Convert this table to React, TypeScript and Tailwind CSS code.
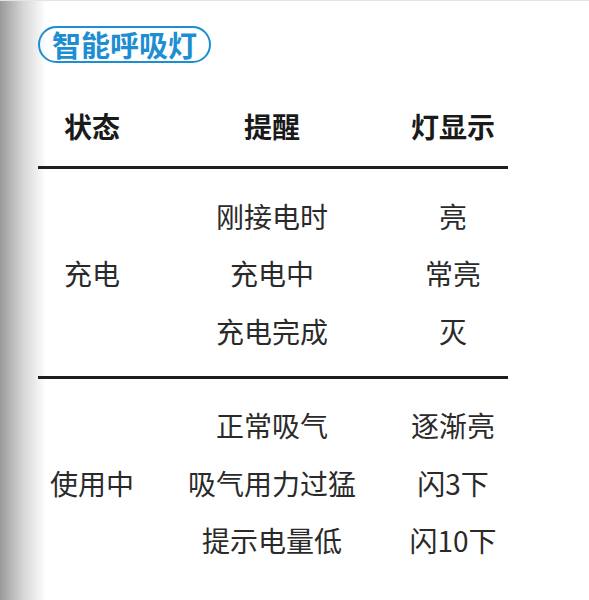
import React from 'react'

interface Row {
  tip: string
  light: string
}

interface Group {
  state: string
  rows: Row[]
}

const groups: Group[] = [
  {
    state: '充电',
    rows: [
      { tip: '刚接电时', light: '亮' },
      { tip: '充电中', light: '常亮' },
      { tip: '充电完成', light: '灭' },
    ],
  },
  {
    state: '使用中',
    rows: [
      { tip: '正常吸气', light: '逐渐亮' },
      { tip: '吸气用力过猛', light: '闪3下' },
      { tip: '提示电量低', light: '闪10下' },
    ],
  },
]

const font = { fontFamily: '"Noto Sans CJK SC", "Noto Sans", sans-serif' }

function App() {
  return (
    <div className="flex w-[589px] h-[600px] bg-white border-t border-[#e4e4e4] overflow-hidden" style={font}>
      {/* page edge shadow */}
      <div className="w-[46px] shrink-0 bg-gradient-to-r from-[#9a9a9a] via-[#d6d6d6] to-white" />

      <div className="flex flex-col pt-[25px] w-[470px] -ml-[8px]">
        <div className="self-start flex items-center h-[37px] px-[12px] rounded-full border-[2.5px] border-[#1d8ed2] text-[#1d8ed2] text-[29px] font-bold leading-none">
          智能呼吸灯
        </div>

        <div className="grid grid-cols-[108px_252px_110px] mt-[43px] h-[40px] items-center text-[28px] font-bold text-[#1a1a1a] leading-none">
          <div className="text-center">状态</div>
          <div className="text-center">提醒</div>
          <div className="text-center">灯显示</div>
        </div>

        {groups.map((g, i) => (
          <div key={g.state} className="flex flex-col">
            <div className={i === 0 ? 'h-[3px] bg-[#1e1e1e] mt-[20px]' : 'h-[3px] bg-[#1e1e1e] mt-[16px]'} />
            <div className="grid grid-cols-[108px_252px_110px] pt-[18px] text-[28px] text-[#2a2a2a] leading-none">
              <div className="row-span-3 flex items-center justify-center">{g.state}</div>
              {g.rows.map((r) => (
                <React.Fragment key={r.tip}>
                  <div className="col-start-2 h-[57.5px] flex items-center justify-center">{r.tip}</div>
                  <div className="col-start-3 h-[57.5px] flex items-center justify-center">{r.light}</div>
                </React.Fragment>
              ))}
            </div>
          </div>
        ))}
      </div>
    </div>
  )
}

export default App
